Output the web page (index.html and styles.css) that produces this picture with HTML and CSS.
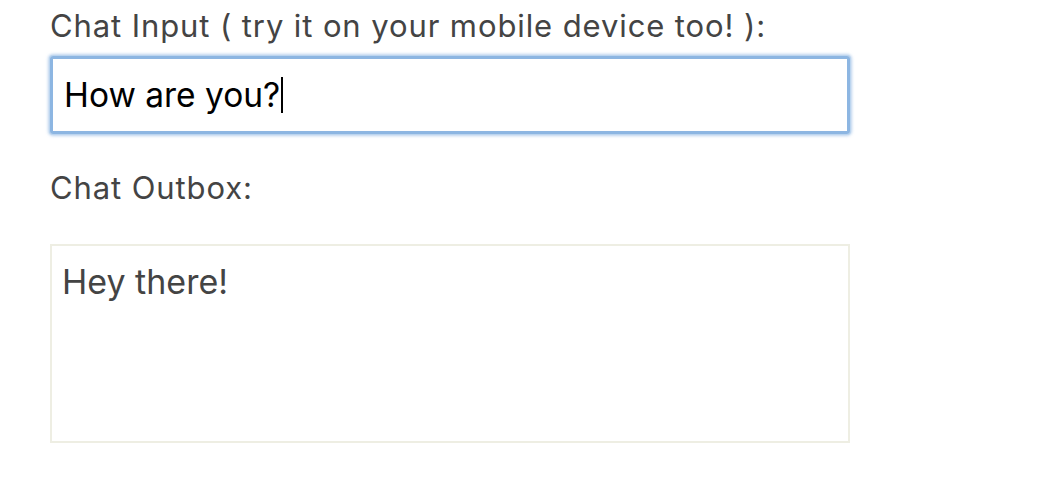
FILE: index.html
```html
<!DOCTYPE html>
<html>
<head>
<meta charset="utf-8">
<link rel="stylesheet" href="styles.css">
</head>
<body>
<div class="page">
  <label class="label label-input">Chat Input ( try it on your mobile device too! ):</label>
  <div class="input-box"><span class="input-text">How are you?</span><span class="caret"></span></div>
  <label class="label label-outbox">Chat Outbox:</label>
  <div class="outbox"><span class="out-text">Hey there!</span></div>
</div>
</body>
</html>
```
FILE: styles.css
```css
html, body {
  margin: 0;
  padding: 0;
  background: #fff;
}
.page {
  padding: 6px 0 0 50px;
  width: 800px;
  font-family: Inter, "Open Sans", sans-serif;
  display: flex;
  flex-direction: column;
}
.label {
  display: block;
  color: #444;
  font-size: 31px;
  letter-spacing: 0.9px;
  line-height: 40px;
}
.input-box {
  margin-top: 10px;
  border: 3px solid #8db6e2;
  box-shadow: 0 0 0 1px #bcd5ef, 0 0 3px 2px rgba(141,182,226,0.6);
  border-radius: 3px;
  display: flex;
  align-items: center;
  padding-left: 11px;
  box-sizing: border-box;
  height: 78px;
}
.input-text {
  color: #000;
  font-size: 33.5px;
  line-height: 40px;
}
.caret {
  width: 1.5px;
  height: 36px;
  background: #000;
  margin-left: 1px;
}
.label-outbox {
  margin-top: 34px;
}
.outbox {
  margin-top: 36px;
  height: 199px;
  border: 2px solid #eeeee3;
  box-sizing: border-box;
  padding: 16px 10px;
}
.out-text {
  color: #444;
  font-size: 34px;
  line-height: 40px;
}
```
